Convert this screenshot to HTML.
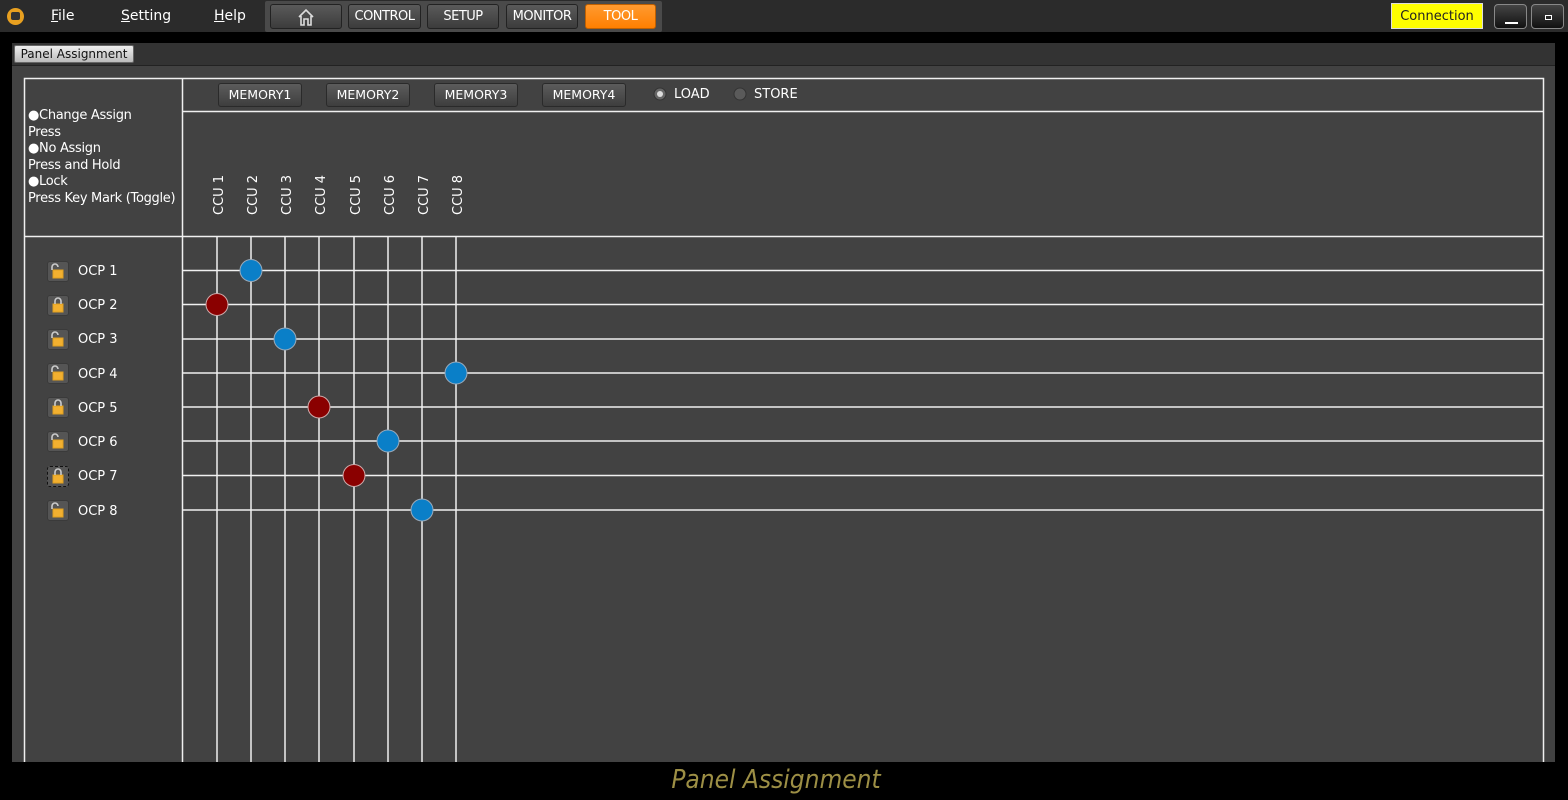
<!DOCTYPE html>
<html><head><meta charset="utf-8"><style>
*{margin:0;padding:0;box-sizing:border-box}
body{width:1568px;height:800px;background:#000;position:relative;overflow:hidden;font-family:"DejaVu Sans","Liberation Sans",sans-serif;color:#fff}
.a{position:absolute}
.menu{font-size:14px;color:#fff;top:8px}
.nb{position:absolute;top:4px;height:25px;border:1px solid #222;border-radius:3px;background:linear-gradient(#5a5a5a,#3c3c3c);color:#fff;font-size:13px;text-align:center;line-height:23px;letter-spacing:-0.5px}
.mb{position:absolute;top:83px;height:24px;width:84px;border:1px solid #2a2a2a;border-radius:3px;background:linear-gradient(#5c5c5c,#3e3e3e);font-size:12.5px;text-align:center;line-height:22px;color:#fff}
.ocp{position:absolute;left:78px;font-size:13px;color:#fff}
.lk{position:absolute;left:47px;width:22px;height:21px;border-radius:3px;background:#555;border:1px solid #3a3a3a}
</style></head><body>
<div class="a" style="left:0;top:0;width:1568px;height:32px;background:#2b2b2b"></div>
<div class="a" style="left:7px;top:8px;width:17px;height:17px;border-radius:50%;background:#e8a020"></div>
<div class="a" style="left:11px;top:12px;width:9px;height:8px;background:#333;border-radius:2px"></div>
<div class="a menu" style="left:51px"><u>F</u>ile</div>
<div class="a menu" style="left:121px"><u>S</u>etting</div>
<div class="a menu" style="left:214px"><u>H</u>elp</div>
<div class="a" style="left:265px;top:1px;width:397px;height:31px;background:#4a4a4a;border-radius:2px"></div>
<div class="nb" style="left:270px;width:72px"><svg width="20" height="20" viewBox="0 0 20 20" style="margin-top:2px"><path d="M3 10 L10 3 L17 10 M5 9 V18 H8 V12 H12 V18 H15 V9" fill="none" stroke="#ddd" stroke-width="1.6"/></svg></div>
<div class="nb" style="left:348px;width:73px">CONTROL</div>
<div class="nb" style="left:427px;width:72px">SETUP</div>
<div class="nb" style="left:506px;width:72px">MONITOR</div>
<div class="nb" style="left:585px;width:71px;background:linear-gradient(#ff9a30,#ff7f00);border-color:#c06000">TOOL</div>
<div class="a" style="left:1391px;top:3px;width:92px;height:26px;background:#ffff00;border:1px solid #ddd;color:#222;font-size:13px;text-align:center;line-height:26px">Connection</div>
<div class="nb" style="left:1494px;width:33px;background:linear-gradient(#444,#111);border:1px solid #888;border-radius:4px"><div style="position:absolute;left:10px;top:17px;width:13px;height:2px;background:#fff"></div></div>
<div class="nb" style="left:1531px;width:33px;background:linear-gradient(#444,#111);border:1px solid #888;border-radius:4px"><div style="position:absolute;left:13px;top:10px;width:7px;height:5px;border:1.5px solid #fff"></div></div>
<div class="a" style="left:12px;top:43px;width:1543px;height:719px;background:#424242"></div>
<div class="a" style="left:12px;top:43px;width:1543px;height:23px;background:#333;border-bottom:1px solid #222"></div>
<div class="a" style="left:14px;top:45px;width:120px;height:18px;background:linear-gradient(#eee,#bbb);border:1px solid #666;border-radius:2px;color:#111;font-size:12px;text-align:center;line-height:16px">Panel Assignment</div>
<svg class="a" style="left:0;top:0" width="1568" height="762">
<g stroke="#f0f0f0" stroke-width="1.5" fill="none">
<rect x="24.5" y="78.5" width="1519" height="700"/>
<line x1="182.5" y1="78" x2="182.5" y2="762"/>
<line x1="182" y1="111.5" x2="1544" y2="111.5"/>
<line x1="24" y1="236.5" x2="1544" y2="236.5"/>
<line x1="217" y1="236" x2="217" y2="762"/><line x1="251" y1="236" x2="251" y2="762"/><line x1="285" y1="236" x2="285" y2="762"/><line x1="319" y1="236" x2="319" y2="762"/><line x1="354" y1="236" x2="354" y2="762"/><line x1="388" y1="236" x2="388" y2="762"/><line x1="422" y1="236" x2="422" y2="762"/><line x1="456" y1="236" x2="456" y2="762"/>
<line x1="182" y1="270.5" x2="1544" y2="270.5"/><line x1="182" y1="304.5" x2="1544" y2="304.5"/><line x1="182" y1="339" x2="1544" y2="339"/><line x1="182" y1="373" x2="1544" y2="373"/><line x1="182" y1="407" x2="1544" y2="407"/><line x1="182" y1="441" x2="1544" y2="441"/><line x1="182" y1="475.5" x2="1544" y2="475.5"/><line x1="182" y1="510" x2="1544" y2="510"/>
</g>
<g stroke="#9ab" stroke-width="1">
<circle cx="251" cy="270.5" r="11" fill="#0a7fc8"/>
<circle cx="217" cy="304.5" r="11" fill="#8a0000" stroke="#caa"/>
<circle cx="285" cy="339" r="11" fill="#0a7fc8"/>
<circle cx="456" cy="373" r="11" fill="#0a7fc8"/>
<circle cx="319" cy="407" r="11" fill="#8a0000" stroke="#caa"/>
<circle cx="388" cy="441" r="11" fill="#0a7fc8"/>
<circle cx="354" cy="475.5" r="11" fill="#8a0000" stroke="#caa"/>
<circle cx="422" cy="510" r="11" fill="#0a7fc8"/>
</g>
<g font-family="DejaVu Sans, Liberation Sans, sans-serif" font-size="13" fill="#fff">
<text transform="translate(223,215) rotate(-90)">CCU 1</text>
<text transform="translate(257,215) rotate(-90)">CCU 2</text>
<text transform="translate(291,215) rotate(-90)">CCU 3</text>
<text transform="translate(325,215) rotate(-90)">CCU 4</text>
<text transform="translate(360,215) rotate(-90)">CCU 5</text>
<text transform="translate(394,215) rotate(-90)">CCU 6</text>
<text transform="translate(428,215) rotate(-90)">CCU 7</text>
<text transform="translate(462,215) rotate(-90)">CCU 8</text>
</g>
<circle cx="660" cy="94" r="6" fill="#666" stroke="#333"/><circle cx="660" cy="94" r="3" fill="#ddd"/>
<circle cx="740" cy="94" r="6" fill="#5a5a5a" stroke="#333"/>
</svg>
<div class="a" style="left:28px;top:108px;font-size:13px;line-height:16.6px;letter-spacing:-0.3px">●Change Assign<br>Press<br>●No Assign<br>Press and Hold<br>●Lock<br>Press Key Mark (Toggle)</div>
<div class="mb" style="left:218px">MEMORY1</div>
<div class="mb" style="left:326px">MEMORY2</div>
<div class="mb" style="left:434px">MEMORY3</div>
<div class="mb" style="left:542px">MEMORY4</div>
<div class="a" style="left:674px;top:87px;font-size:13px">LOAD</div>
<div class="a" style="left:754px;top:87px;font-size:13px">STORE</div>
<div class="lk" style="top:261px"></div><div class="ocp" style="top:264px">OCP 1</div>
<div class="lk" style="top:295px"></div><div class="ocp" style="top:298px">OCP 2</div>
<div class="lk" style="top:329px"></div><div class="ocp" style="top:332px">OCP 3</div>
<div class="lk" style="top:363px"></div><div class="ocp" style="top:367px">OCP 4</div>
<div class="lk" style="top:397px"></div><div class="ocp" style="top:401px">OCP 5</div>
<div class="lk" style="top:431px"></div><div class="ocp" style="top:435px">OCP 6</div>
<div class="lk" style="top:466px;border:1px dashed #111"></div><div class="ocp" style="top:469px">OCP 7</div>
<div class="lk" style="top:500px"></div><div class="ocp" style="top:504px">OCP 8</div>
<svg class="a" style="left:47px;top:261px" width="22" height="260">
<g fill="#f2b030" stroke="#e0a020">
<rect x="6" y="9" width="10" height="8"/><rect x="6" y="43" width="10" height="8"/><rect x="6" y="77" width="10" height="8"/><rect x="6" y="111" width="10" height="8"/><rect x="6" y="145" width="10" height="8"/><rect x="6" y="179" width="10" height="8"/><rect x="6" y="214" width="10" height="8"/><rect x="6" y="248" width="10" height="8"/>
</g>
<g fill="none" stroke="#ccc" stroke-width="1.6">
<path d="M5 9 V6 a3 3 0 0 1 6 0"/><path d="M8 43 V40 a3 3 0 0 1 6 0 V43"/><path d="M5 77 V74 a3 3 0 0 1 6 0"/><path d="M5 111 V108 a3 3 0 0 1 6 0"/><path d="M8 145 V142 a3 3 0 0 1 6 0 V145"/><path d="M5 179 V176 a3 3 0 0 1 6 0"/><path d="M8 214 V211 a3 3 0 0 1 6 0 V214"/><path d="M5 248 V245 a3 3 0 0 1 6 0"/>
</g>
</svg>
<div class="a" style="left:0;top:762px;width:1568px;text-align:center;padding-right:16px;font-size:26px;font-style:italic;color:#9d8f45;line-height:36px;font-family:'DejaVu Sans Condensed','Liberation Sans Narrow',sans-serif">Panel Assignment</div>
</body></html>
